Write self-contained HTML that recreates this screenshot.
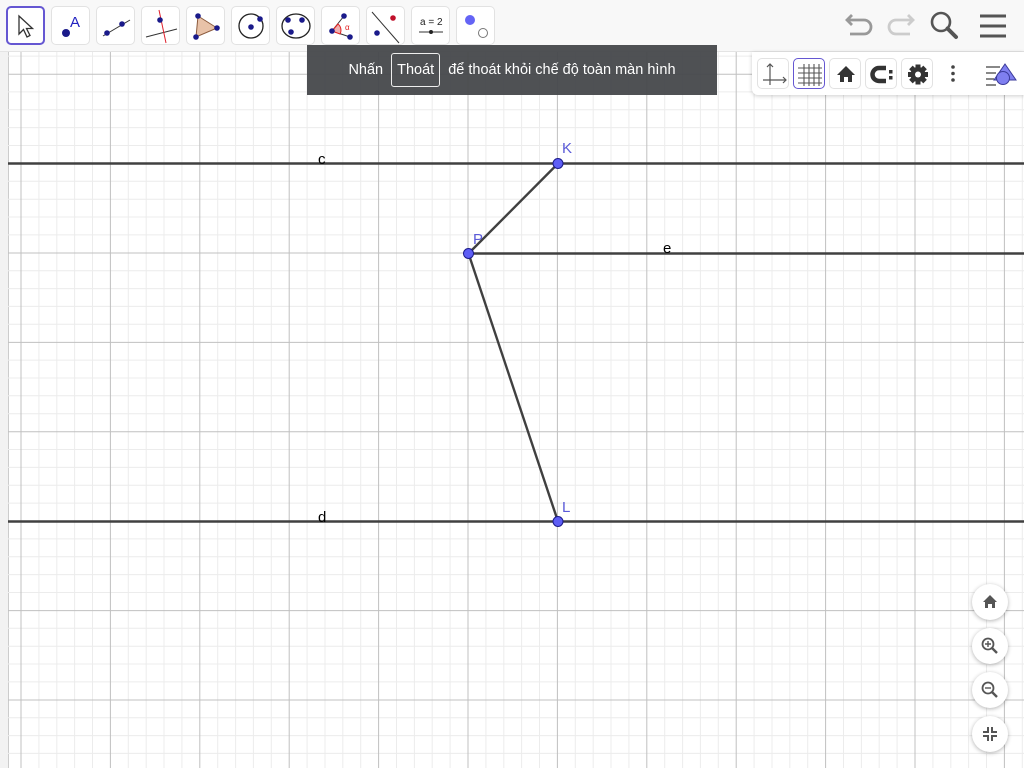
<!DOCTYPE html>
<html><head><meta charset="utf-8"><style>
*{margin:0;padding:0;box-sizing:border-box}
body{width:1024px;height:768px;overflow:hidden;background:#fff;font-family:"Liberation Sans",sans-serif;position:relative}
#tb{position:absolute;left:0;top:0;width:1024px;height:52px;background:#f8f8f8;border-bottom:1px solid #e4e4e4}
.b{position:absolute;top:6px;width:39px;height:39px;border:1px solid #e2e2e2;border-radius:5px;background:#fff}
.b svg{position:absolute;left:0;top:0}
#ban{position:absolute;left:307px;top:45px;width:410px;height:50px;background:rgba(70,72,75,.95);color:#fff;font-size:14.5px;display:flex;align-items:center;justify-content:center;gap:8px}
#ban span.k{border:1px solid #eee;border-radius:3px;padding:8px 5px}
#rp{position:absolute;left:752px;top:52px;width:272px;height:43px;background:#fff;box-shadow:0 1px 4px rgba(0,0,0,.2);border-radius:0 0 0 6px}
.r{position:absolute;top:6px;width:32px;height:31px;border:1px solid #e2e2e2;border-radius:5px;background:#fff}
.r svg{position:absolute;left:0;top:0}
.z{position:absolute;left:972px;width:36px;height:36px;border-radius:50%;background:#fff;box-shadow:0 1px 4px rgba(0,0,0,.3)}
.z svg{position:absolute;left:0;top:0}
</style></head><body>
<svg width="1024" height="768" style="position:absolute;left:0;top:0">
<rect x="0" y="52" width="8" height="716" fill="#f2f2f2"/>
<line x1="8.5" y1="52" x2="8.5" y2="768" stroke="#ccc"/>
<g stroke="#ececec" stroke-width="1">
<path d="M38.9 52V768M56.8 52V768M74.6 52V768M92.5 52V768M128.3 52V768M146.2 52V768M164 52V768M181.9 52V768M217.7 52V768M235.6 52V768M253.4 52V768M271.3 52V768M307.1 52V768M325 52V768M342.8 52V768M360.7 52V768M396.5 52V768M414.4 52V768M432.2 52V768M450.1 52V768M485.9 52V768M503.8 52V768M521.6 52V768M539.5 52V768M575.3 52V768M593.2 52V768M611 52V768M628.9 52V768M664.7 52V768M682.6 52V768M700.4 52V768M718.3 52V768M754.1 52V768M772 52V768M789.8 52V768M807.7 52V768M843.5 52V768M861.4 52V768M879.2 52V768M897.1 52V768M932.9 52V768M950.8 52V768M968.6 52V768M986.5 52V768M1022.3 52V768"/>
<path d="M8 56.1H1024M8 91.9H1024M8 109.8H1024M8 127.6H1024M8 145.5H1024M8 181.3H1024M8 199.2H1024M8 217H1024M8 234.9H1024M8 270.7H1024M8 288.6H1024M8 306.4H1024M8 324.3H1024M8 360.1H1024M8 378H1024M8 395.8H1024M8 413.7H1024M8 449.5H1024M8 467.4H1024M8 485.2H1024M8 503.1H1024M8 538.9H1024M8 556.8H1024M8 574.6H1024M8 592.5H1024M8 628.3H1024M8 646.2H1024M8 664H1024M8 681.9H1024M8 717.7H1024M8 735.6H1024M8 753.4H1024"/>
</g>
<g stroke="#c0c0c0" stroke-width="1">
<path d="M21 52V768M110.4 52V768M199.8 52V768M289.2 52V768M378.6 52V768M468 52V768M557.4 52V768M646.8 52V768M736.2 52V768M825.6 52V768M915 52V768M1004.4 52V768"/>
<path d="M8 74.2H1024M8 163.6H1024M8 253H1024M8 342.4H1024M8 431.8H1024M8 521.2H1024M8 610.6H1024M8 700H1024"/>
</g>
<g stroke="#404040" stroke-width="2.4">
<line x1="8" y1="163.5" x2="1024" y2="163.5"/>
<line x1="8" y1="521.5" x2="1024" y2="521.5"/>
<line x1="468.5" y1="253.5" x2="1024" y2="253.5"/>
<line x1="468.5" y1="253.5" x2="558" y2="163.5"/>
<line x1="468.5" y1="253.5" x2="558" y2="521.5"/>
</g>
<g fill="#5e5ef5" stroke="#1a1a8a" stroke-width="1"><circle cx="558" cy="163.5" r="5"/><circle cx="468.5" cy="253.5" r="5"/><circle cx="558" cy="521.5" r="5"/></g>
<g font-size="15" font-family="Liberation Sans,sans-serif">
<text x="318" y="164" fill="#000">c</text><text x="318" y="522" fill="#000">d</text><text x="663" y="253" fill="#000">e</text>
<text x="562" y="153" fill="#5a5ad8">K</text><text x="473" y="244" fill="#5a5ad8">P</text><text x="562" y="512" fill="#5a5ad8">L</text>
</g>
</svg>
<div id="tb">
<div class="b" style="left:6px;border:2px solid #6557d2"><svg width="35" height="35"><path d="M11 8L11 26L15.5 21.5L19 29L22 27.5L18.5 20.5L24.5 20.5Z" fill="#fff" stroke="#333" stroke-width="1.3"/></svg></div>
<div class="b" style="left:51px"><svg width="37" height="37"><circle cx="14" cy="26" r="4" fill="#1a1a8a"/><text x="18" y="20" fill="#2020c0" font-size="15" font-family="Liberation Sans">A</text></svg></div>
<div class="b" style="left:96px"><svg width="37" height="37"><line x1="6" y1="29" x2="33" y2="13" stroke="#333"/><circle cx="10" cy="26" r="2.8" fill="#1a1a8a"/><circle cx="25" cy="17" r="2.8" fill="#1a1a8a"/></svg></div>
<div class="b" style="left:141px"><svg width="37" height="37"><line x1="4" y1="30" x2="35" y2="22" stroke="#333"/><line x1="17" y1="3" x2="24" y2="36" stroke="#e0202c"/><circle cx="18" cy="13" r="2.8" fill="#1a1a8a"/></svg></div>
<div class="b" style="left:186px"><svg width="37" height="37"><path d="M11 9L30 21L9 30Z" fill="#e8c2a8" stroke="#8b5a3c"/><circle cx="11" cy="9" r="2.8" fill="#1a1a8a"/><circle cx="30" cy="21" r="2.8" fill="#1a1a8a"/><circle cx="9" cy="30" r="2.8" fill="#1a1a8a"/></svg></div>
<div class="b" style="left:231px"><svg width="37" height="37"><circle cx="19" cy="19" r="12" fill="none" stroke="#222" stroke-width="1.3"/><circle cx="19" cy="20" r="2.8" fill="#1a1a8a"/><circle cx="28" cy="12" r="2.8" fill="#1a1a8a"/></svg></div>
<div class="b" style="left:276px"><svg width="37" height="37"><ellipse cx="19" cy="19" rx="14" ry="12" fill="none" stroke="#222" stroke-width="1.3"/><circle cx="11" cy="13" r="2.8" fill="#1a1a8a"/><circle cx="25" cy="13" r="2.8" fill="#1a1a8a"/><circle cx="14" cy="25" r="2.8" fill="#1a1a8a"/></svg></div>
<div class="b" style="left:321px"><svg width="37" height="37"><path d="M22 9L10 24L28 30" fill="none" stroke="#333"/><path d="M10 24L16 17A8 8 0 0 1 18 27Z" fill="#f0b0b0" stroke="#e02020"/><text x="23" y="23" font-size="8" fill="#e02020">α</text><circle cx="22" cy="9" r="2.8" fill="#1a1a8a"/><circle cx="10" cy="24" r="2.8" fill="#1a1a8a"/><circle cx="28" cy="30" r="2.8" fill="#1a1a8a"/></svg></div>
<div class="b" style="left:366px"><svg width="37" height="37"><line x1="5" y1="5" x2="32" y2="36" stroke="#333"/><circle cx="26" cy="11" r="2.8" fill="#c0102a"/><circle cx="10" cy="26" r="2.8" fill="#1a1a8a"/></svg></div>
<div class="b" style="left:411px"><svg width="37" height="37"><text x="8" y="18" font-size="10" font-family="Liberation Sans" fill="#222">a = 2</text><line x1="7" y1="25" x2="31" y2="25" stroke="#333"/><circle cx="19" cy="25" r="2" fill="#222"/></svg></div>
<div class="b" style="left:456px"><svg width="37" height="37"><circle cx="13" cy="13" r="5" fill="#6464f5"/><circle cx="26" cy="26" r="4.5" fill="#fff" stroke="#777"/></svg></div>
<svg width="180" height="52" style="position:absolute;left:844px;top:0">
<path d="M8 15L3 20L8 25M3 20H20A7 7 0 0 1 20 34H6" fill="none" stroke="#999" stroke-width="2.8"/>
<path d="M64 15L69 20L64 25M69 20H52A7 7 0 0 0 52 34H66" fill="none" stroke="#ccc" stroke-width="2.8"/>
<circle cx="97" cy="22" r="9" fill="none" stroke="#555" stroke-width="2.6"/><line x1="103.5" y1="28.5" x2="112" y2="37" stroke="#555" stroke-width="4" stroke-linecap="round"/>
<path d="M136 16H162M136 26H162M136 36H162" stroke="#555" stroke-width="3"/>
</svg>
</div>
<div id="ban">Nhấn <span class="k">Thoát</span> để thoát khỏi chế độ toàn màn hình</div>
<div id="rp">
<div class="r" style="left:5px"><svg width="32" height="31"><path d="M12 5V26M5 21H28M25 18L28 21L25 24M9 8L12 5L15 8" fill="none" stroke="#555" stroke-width="1.2"/></svg></div>
<div class="r" style="left:41px;border-color:#6557d2"><svg width="32" height="31"><path d="M10 5V27M15 5V27M20 5V27M25 5V27M4 9H28M4 14H28M4 19H28M4 24H28" stroke="#555" stroke-width="1.1"/></svg></div>
<div class="r" style="left:77px"><svg width="32" height="31"><path d="M16 7L7 16H10V23H14V18H18V23H22V16H25Z" fill="#333"/></svg></div>
<div class="r" style="left:113px"><svg width="32" height="31"><path d="M20 9H13A6 6 0 0 0 13 22H20" fill="none" stroke="#333" stroke-width="4.5"/><rect x="23" y="11" width="3.5" height="3.5" fill="#333"/><rect x="23" y="17" width="3.5" height="3.5" fill="#333"/></svg></div>
<div class="r" style="left:149px"><svg width="32" height="31"><g transform="translate(16 15.5)"><circle r="7.5" fill="#333"/><path d="M-2.5-10H2.5V10H-2.5ZM-10-2.5H10V2.5H-10Z" fill="#333"/><path d="M-2.5-10H2.5V10H-2.5ZM-10-2.5H10V2.5H-10Z" fill="#333" transform="rotate(45)"/><circle r="3" fill="#fff"/></g></svg></div>
<svg width="12" height="31" style="position:absolute;left:195px;top:6px"><circle cx="6" cy="9" r="1.8" fill="#444"/><circle cx="6" cy="15.5" r="1.8" fill="#444"/><circle cx="6" cy="22" r="1.8" fill="#444"/></svg>
<svg width="40" height="31" style="position:absolute;left:232px;top:6px"><path d="M2 9H16M2 15H12M2 21H10M2 27H12" stroke="#888" stroke-width="2"/><path d="M21 6L32 22H10Z" fill="#7f7ff0" stroke="#3a3a9a"/><circle cx="19" cy="20" r="6.5" fill="#7f7ff0" stroke="#3a3a9a"/></svg>
</div>
<div class="z" style="top:584px"><svg width="36" height="36"><path d="M18 11L11 18H13V24H16V20H20V24H23V18H25Z" fill="#555"/></svg></div>
<div class="z" style="top:628px"><svg width="36" height="36"><circle cx="16" cy="16" r="5.5" fill="none" stroke="#555" stroke-width="1.8"/><path d="M13 16H19M16 13V19" stroke="#555" stroke-width="1.4"/><line x1="20" y1="20" x2="25" y2="25" stroke="#555" stroke-width="2.4"/></svg></div>
<div class="z" style="top:672px"><svg width="36" height="36"><circle cx="16" cy="16" r="5.5" fill="none" stroke="#555" stroke-width="1.8"/><path d="M13 16H19" stroke="#555" stroke-width="1.4"/><line x1="20" y1="20" x2="25" y2="25" stroke="#555" stroke-width="2.4"/></svg></div>
<div class="z" style="top:716px"><svg width="36" height="36"><path d="M16 11V16H11M20 11V16H25M16 25V20H11M20 25V20H25" fill="none" stroke="#555" stroke-width="2"/></svg></div>
</body></html>
